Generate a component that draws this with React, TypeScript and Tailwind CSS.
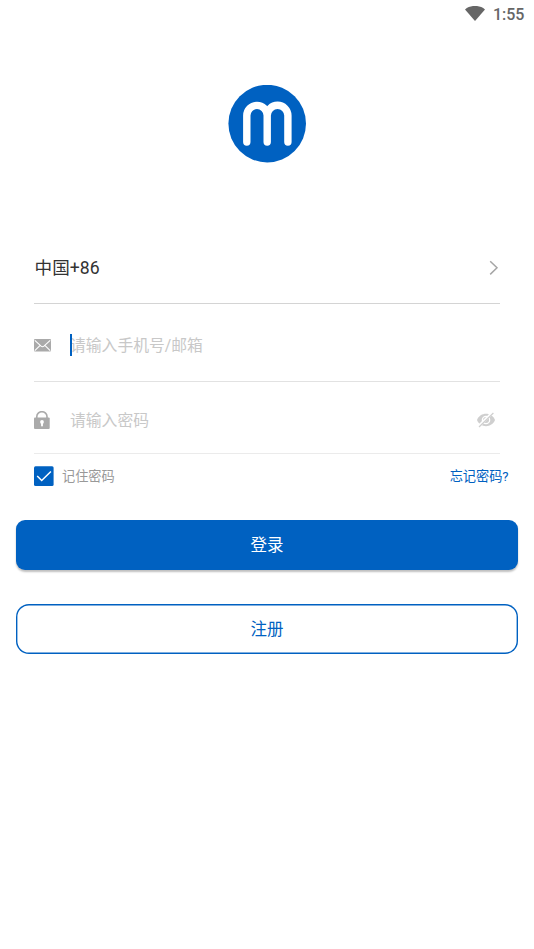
import React from "react";

const Logo = () => (
  <svg className="h-[78px] w-[78px]" viewBox="0 0 78 78" fill="none">
    <circle cx="39.2" cy="38.6" r="38.8" fill="#0061c1" />
    <path
      d="M18.8 57V30.6a10.2 10.2 0 0 1 20.4 0V57M39.2 30.6a10.35 10.35 0 0 1 20.7 0V57"
      stroke="#fff"
      strokeWidth="7.4"
      strokeLinecap="round"
    />
  </svg>
);

const WifiIcon = () => (
  <svg className="h-[16px] w-[20px]" viewBox="0 0 20 16">
    <path d="M0 3.4C5.6-1.3 14.4-1.3 20 3.4L10 15z" fill="#666" />
  </svg>
);

const ChevronIcon = () => (
  <svg className="h-[16px] w-[10px]" viewBox="0 0 10 16" fill="none">
    <path d="M1.2 1.2L8 7.8l-6.8 6.6" stroke="#a6a6a6" strokeWidth="1.5" />
  </svg>
);

const MailIcon = () => (
  <svg className="h-[13px] w-[17px]" viewBox="0 0 17 13" fill="none">
    <rect width="17" height="12.6" rx="1" fill="#aaa" />
    <path
      d="M.8 1.4l6.3 5.8q1.4 1.2 2.8 0l6.3-5.8M.8 11.6L5.9 6.6M16.2 11.6L11.1 6.6"
      stroke="#fff"
      strokeWidth="1.1"
    />
  </svg>
);

const LockIcon = () => (
  <svg className="h-[18px] w-[16px]" viewBox="0 0 16 18" fill="none">
    <path d="M2.8 7V5.6a5.1 4.9 0 0 1 10.2 0V7" stroke="#aaa" strokeWidth="1.6" />
    <rect y="6.6" width="15.7" height="11.4" rx="1" fill="#aaa" />
    <circle cx="8" cy="10.9" r="1.9" fill="#fff" />
    <path d="M8 11v3.6" stroke="#fff" strokeWidth="1.9" strokeLinecap="round" />
  </svg>
);

const HiddenEyeIcon = () => (
  <svg className="h-[16px] w-[18px]" viewBox="0 0 18 16" fill="none">
    <path d="M0 8C3.2-.2 14.8-.2 18 8 14.8 16.2 3.2 16.2 0 8z" fill="#cfcfcf" />
    <circle cx="9" cy="8" r="4.3" fill="#fff" />
    <circle cx="9" cy="8" r="3" fill="#cfcfcf" />
    <path d="M1.4 14.6L15.8.4" stroke="#fff" strokeWidth="2.8" />
    <path d="M2 15L16.4 1" stroke="#cfcfcf" strokeWidth="1.2" />
  </svg>
);

const CheckIcon = () => (
  <svg className="h-[20px] w-[20px]" viewBox="0 0 20 20" fill="none">
    <rect y="0.3" width="19.6" height="19.6" rx="1.5" fill="#0061c1" />
    <path d="M3.2 10l4.5 4.5 9.2-9" stroke="#fff" strokeWidth="1.5" />
  </svg>
);

const App = () => {
  return (
    <main className="h-[949px] w-[534px] overflow-hidden bg-white font-[Roboto,'Noto_Sans_CJK_SC',sans-serif]">
      <header className="flex h-[28px] items-center justify-end gap-[8px] pr-[9.6px]">
        <WifiIcon />
        <span className="pt-[2px] text-[16px] font-medium leading-[26px] text-[#666]">1:55</span>
      </header>

      <div className="flex justify-center pt-[57px]">
        <Logo />
      </div>

      <section className="mx-[34px] mt-[69px]">
        <div className="flex h-[72px] items-center justify-between border-b border-[#d4d4d4] pr-[1px] pl-[0.6px]">
          <span className="pt-[2px] text-[17.6px] text-[#333]">中国+86</span>
          <ChevronIcon />
        </div>
        <div className="flex h-[78px] items-center border-b border-[#e2e2e2] pt-[5px]">
          <MailIcon />
          <div className="relative ml-[19px] pt-[2px] text-[15.8px] text-[#c8c8c8]">
            请输入手机号/邮箱
            <span className="absolute top-[2px] left-0 h-[22px] w-[2px] bg-[#0061c1]" />
          </div>
        </div>
        <div className="flex h-[72px] items-center border-b border-[#ebebeb] pt-[5px] pr-[5px]">
          <LockIcon />
          <span className="ml-[20px] flex-1 pt-[2px] text-[15.8px] text-[#c8c8c8]">
            请输入密码
          </span>
          <HiddenEyeIcon />
        </div>
      </section>

      <div className="mt-[12px] flex h-[20px] items-center pr-[25.4px] pl-[34px] text-[13.2px]">
        <CheckIcon />
        <span className="ml-[8px] flex-1 pt-[2px] text-[#999]">记住密码</span>
        <a className="pt-[2px] text-[#0061c1]">忘记密码?</a>
      </div>

      <div className="mt-[34px] flex flex-col gap-[34px] px-[16.4px] text-[16.5px]">
        <button className="h-[50px] rounded-[9px] bg-[#0061c1] pt-[3px] text-white shadow-[0_2px_2px_rgba(0,0,0,0.25)]">
          登录
        </button>
        <button className="h-[50px] rounded-[13px] pt-[3px] text-[#0061c1] shadow-[inset_0_0_0_1.4px_#0061c1]">
          注册
        </button>
      </div>
    </main>
  );
};

export default App;
